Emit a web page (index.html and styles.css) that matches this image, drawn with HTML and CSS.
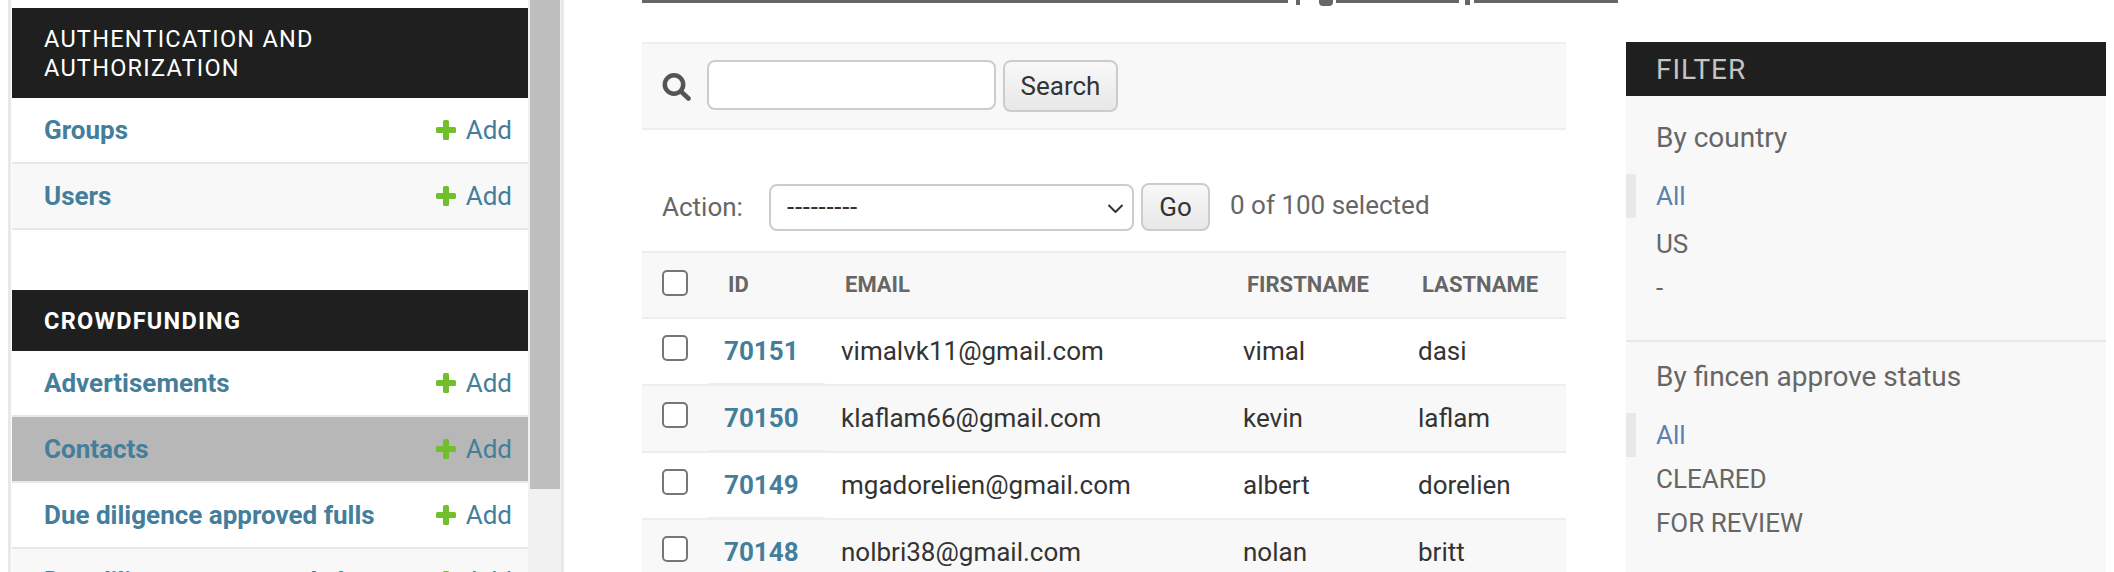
FILE: index.html
```html
<!DOCTYPE html>
<html lang="en">
<head>
  <meta charset="UTF-8" />
  <title>Select contact to change</title>
  <link rel="stylesheet" href="styles.css">
</head>
<body>
  <nav class="sidebar">
    <div class="app-list">
      <section class="app">
        <h2 class="caption">Authentication and Authorization</h2>
        <div class="model-row">
          <a class="model-name" href="#">Groups</a>
          <a class="add-link" href="#"><svg class="plus" viewBox="0 0 20 20"><rect x="7" width="6" height="20" rx="1.5"/><rect y="7" width="20" height="6" rx="1.5"/></svg>Add</a>
        </div>
        <div class="model-row alt">
          <a class="model-name" href="#">Users</a>
          <a class="add-link" href="#"><svg class="plus" viewBox="0 0 20 20"><rect x="7" width="6" height="20" rx="1.5"/><rect y="7" width="20" height="6" rx="1.5"/></svg>Add</a>
        </div>
      </section>
      <section class="app">
        <h2 class="caption strong">Crowdfunding</h2>
        <div class="model-row">
          <a class="model-name" href="#">Advertisements</a>
          <a class="add-link" href="#"><svg class="plus" viewBox="0 0 20 20"><rect x="7" width="6" height="20" rx="1.5"/><rect y="7" width="20" height="6" rx="1.5"/></svg>Add</a>
        </div>
        <div class="model-row current">
          <a class="model-name" href="#">Contacts</a>
          <a class="add-link" href="#"><svg class="plus" viewBox="0 0 20 20"><rect x="7" width="6" height="20" rx="1.5"/><rect y="7" width="20" height="6" rx="1.5"/></svg>Add</a>
        </div>
        <div class="model-row">
          <a class="model-name" href="#">Due diligence approved fulls</a>
          <a class="add-link" href="#"><svg class="plus" viewBox="0 0 20 20"><rect x="7" width="6" height="20" rx="1.5"/><rect y="7" width="20" height="6" rx="1.5"/></svg>Add</a>
        </div>
        <div class="model-row alt">
          <a class="model-name" href="#">Due diligence approved alts</a>
          <a class="add-link" href="#"><svg class="plus" viewBox="0 0 20 20"><rect x="7" width="6" height="20" rx="1.5"/><rect y="7" width="20" height="6" rx="1.5"/></svg>Add</a>
        </div>
      </section>
    </div>
    <div class="scroll-track"><div class="scroll-thumb"></div></div>
  </nav>

  <main class="content">
    <div class="title-rule">
      <span class="rule seg-a"></span>
      <span class="stub stub-p"></span>
      <span class="stub stub-y"></span>
      <span class="rule seg-b"></span>
      <span class="stub stub-q"></span>
      <span class="rule seg-c"></span>
    </div>

    <form class="toolbar">
      <svg class="search-icon" viewBox="0 0 30 28"><circle cx="12" cy="11.5" r="9.2"/><line x1="19" y1="18.5" x2="26.5" y2="25.5"/></svg>
      <input class="search-input" type="text">
      <button class="btn search-btn" type="button">Search</button>
    </form>

    <div class="actions">
      <label class="action-label">Action:</label>
      <div class="select-wrap">
        <select class="action-select"><option>---------</option></select>
        <svg class="chevron" viewBox="0 0 16 9"><polyline points="1,1 8,8 15,1"/></svg>
      </div>
      <button class="btn go-btn" type="button">Go</button>
      <span class="action-counter">0 of 100 selected</span>
    </div>

    <table class="results">
      <thead>
        <tr>
          <th class="col-check"><input type="checkbox"></th>
          <th class="col-id">Id</th>
          <th class="col-email">Email</th>
          <th class="col-first">Firstname</th>
          <th class="col-last">Lastname</th>
        </tr>
      </thead>
      <tbody>
        <tr>
          <td><input type="checkbox"></td>
          <th class="row-id"><a href="#">70151</a></th>
          <td>vimalvk11@gmail.com</td>
          <td>vimal</td>
          <td>dasi</td>
        </tr>
        <tr class="alt">
          <td><input type="checkbox"></td>
          <th class="row-id"><a href="#">70150</a></th>
          <td>klaflam66@gmail.com</td>
          <td>kevin</td>
          <td>laflam</td>
        </tr>
        <tr>
          <td><input type="checkbox"></td>
          <th class="row-id"><a href="#">70149</a></th>
          <td>mgadorelien@gmail.com</td>
          <td>albert</td>
          <td>dorelien</td>
        </tr>
        <tr class="alt">
          <td><input type="checkbox"></td>
          <th class="row-id"><a href="#">70148</a></th>
          <td>nolbri38@gmail.com</td>
          <td>nolan</td>
          <td>britt</td>
        </tr>
      </tbody>
    </table>
  </main>

  <aside class="filter">
    <h2 class="filter-head">Filter</h2>
    <div class="filter-group first">
      <h3 class="filter-title">By country</h3>
      <ul class="filter-list">
        <li class="selected"><a href="#">All</a></li>
        <li class="spaced"><a href="#">US</a></li>
        <li><a href="#">-</a></li>
      </ul>
    </div>
    <div class="filter-group">
      <h3 class="filter-title">By fincen approve status</h3>
      <ul class="filter-list">
        <li class="selected"><a href="#">All</a></li>
        <li><a href="#">CLEARED</a></li>
        <li><a href="#">FOR REVIEW</a></li>
      </ul>
    </div>
  </aside>
</body>
</html>
```

FILE: styles.css
```css
html, body {
  height: 572px;
  overflow: hidden;
}

body {
  margin: 0;
  display: flex;
  align-items: flex-start;
  font-family: Roboto, "Liberation Sans", sans-serif;
  font-size: 26px;
  color: #333;
  background-color: #fff;
}

a {
  color: #447e9b;
  text-decoration: none;
}

/* sidebar */
.sidebar {
  display: flex;
  flex: none;
  width: 550px;
  height: 572px;
  margin-left: 8px;
  border-left: 3px solid #e8e8e8;
  border-right: 3px solid #e8e8e8;
  overflow: hidden;
}

.app-list {
  flex: none;
  width: 516px;
  padding: 8px 0 0 1px;
}

.app {
  margin-bottom: 60px;
}

.caption {
  margin: 0;
  padding: 17px 32px 15px 32px;
  font-size: 23.5px;
  font-weight: 400;
  line-height: 29px;
  letter-spacing: 1.25px;
  text-transform: uppercase;
  color: #fff;
  background-color: #1f1f1f;
}

.caption.strong {
  font-weight: 700;
}

.model-row {
  display: flex;
  justify-content: space-between;
  align-items: center;
  height: 64px;
  padding: 0 16px 0 32px;
  border-bottom: 2px solid #e8e8e8;
}

.model-row.alt {
  background-color: #f8f8f8;
}

.model-row.current {
  background-color: #b7b7b7;
}

.model-name {
  font-weight: 700;
}

.add-link {
  display: flex;
  align-items: center;
  gap: 10px;
}

.plus {
  width: 20px;
  height: 20px;
  fill: #70bf2b;
}

.scroll-track {
  flex: 1;
  padding: 0 1px 0 2px;
  background-color: #f1f1f1;
}

.scroll-thumb {
  height: 489px;
  background-color: #bebebe;
}

/* main column */
.content {
  flex: none;
  width: 924px;
  margin-left: 78px;
}

.title-rule {
  display: flex;
  align-items: flex-start;
  height: 42px;
  width: 977px;
}

.rule {
  height: 3px;
  background-color: #666;
}

.seg-a { width: 646px; }
.seg-b { width: 123px; }
.seg-c { width: 144px; }

.stub {
  background-color: #666;
}

.stub-p { width: 4px; height: 5px; margin: 0 0 0 8px; }
.stub-y { width: 14px; height: 6px; margin: 0 3px 0 19px; border-radius: 0 0 4px 4px; }
.stub-q { width: 5px; height: 5px; margin: 0 4px 0 6px; }

.toolbar {
  display: flex;
  align-items: flex-start;
  height: 68px;
  padding: 16px 0 0 20px;
  margin: 0;
  background-color: #f8f8f8;
  border-top: 2px solid #eee;
  border-bottom: 2px solid #eee;
}

.search-icon {
  flex: none;
  width: 30px;
  height: 28px;
  margin-top: 13px;
  fill: none;
  stroke: #555;
  stroke-width: 4.5;
  stroke-linecap: round;
}

.search-input {
  width: 289px;
  height: 50px;
  margin: 0 7px 0 15px;
  padding: 0 10px;
  box-sizing: border-box;
  border: 2px solid #ccc;
  border-radius: 8px;
  background-color: #fff;
}

.btn {
  box-sizing: border-box;
  padding: 0;
  font-family: inherit;
  font-size: 26px;
  color: #333;
  border: 2px solid #ccc;
  border-radius: 8px;
  background: linear-gradient(#f8f8f8, #e8e8e8);
}

.search-btn {
  width: 115px;
  height: 52px;
}

.go-btn {
  width: 69px;
  height: 48px;
  margin-left: 7px;
}

.actions {
  display: flex;
  align-items: center;
  height: 48px;
  margin: 53px 0 20px;
  padding-left: 20px;
  color: #666;
}

.action-label {
  width: 107px;
}

.select-wrap {
  position: relative;
  height: 47px;
}

.action-select {
  width: 365px;
  height: 47px;
  padding: 0 16px;
  font-family: inherit;
  font-size: 26px;
  letter-spacing: 0.7px;
  color: #333;
  border: 2px solid #ccc;
  border-radius: 8px;
  background-color: #fff;
  appearance: none;
}

.chevron {
  position: absolute;
  top: 20px;
  right: 10px;
  width: 17px;
  height: 9px;
  fill: none;
  stroke: #333;
  stroke-width: 2;
}

.action-counter {
  margin: 0 0 4px 20px;
}

.results {
  width: 924px;
  table-layout: fixed;
  border-collapse: separate;
  border-spacing: 0;
}

.results thead th {
  height: 62px;
  padding: 0 0 2px 20px;
  box-sizing: content-box;
  font-size: 22px;
  font-weight: 700;
  text-align: left;
  text-transform: uppercase;
  color: #666;
  background-color: #f8f8f8;
  border-top: 2px solid #eee;
  border-bottom: 2px solid #eee;
}

.col-check { width: 46px; }
.col-id { width: 97px; }
.col-email { width: 382px; }
.col-first { width: 155px; }

.results td, .results .row-id {
  height: 63px;
  padding: 0 0 2px 16px;
  box-sizing: content-box;
  border-bottom: 2px solid #eee;
}

.results td:first-child {
  padding-left: 20px;
}

.row-id {
  text-align: left;
  border-bottom-color: transparent;
  background: linear-gradient(#eee, #eee) 0 calc(100% - 1px) / 100% 2px no-repeat border-box;
}

.row-id a {
  font-weight: 700;
}

.results tr.alt {
  background-color: #f8f8f8;
}

.results input[type="checkbox"] {
  display: block;
  box-sizing: border-box;
  width: 26px;
  height: 26px;
  margin: -3px 0 0;
  border: 2px solid #767676;
  border-radius: 5px;
  background-color: #fff;
  appearance: none;
}

.results td input[type="checkbox"] {
  margin-top: -5px;
}

/* filter */
.filter {
  flex: none;
  width: 480px;
  height: 530px;
  margin: 42px 0 0 60px;
  color: #666;
  background-color: #f8f8f8;
}

.filter-head {
  height: 54px;
  margin: 0;
  padding-left: 30px;
  font-size: 28px;
  font-weight: 400;
  line-height: 56px;
  letter-spacing: 1px;
  text-transform: uppercase;
  color: #c4c4c4;
  background-color: #1f1f1f;
}

.filter-group {
  padding: 20px 0 30px;
  border-bottom: 2px solid #e8e8e8;
}

.filter-group.first {
  margin-top: 7px;
}

.filter-title {
  height: 30px;
  margin: 0 0 21px;
  padding-left: 30px;
  font-size: 28px;
  font-weight: 400;
  line-height: 30px;
}

.filter-list {
  margin: 0;
  padding: 0;
  list-style: none;
}

.filter-list li {
  height: 44px;
  padding-left: 30px;
  line-height: 44px;
}

.filter-list a {
  color: #666;
}

.filter-list li.selected {
  padding-left: 20px;
  border-left: 10px solid #e8e8e8;
}

.filter-list li.selected a {
  color: #5b80b2;
}

.filter-list li.spaced {
  margin-top: 4px;
}
```
